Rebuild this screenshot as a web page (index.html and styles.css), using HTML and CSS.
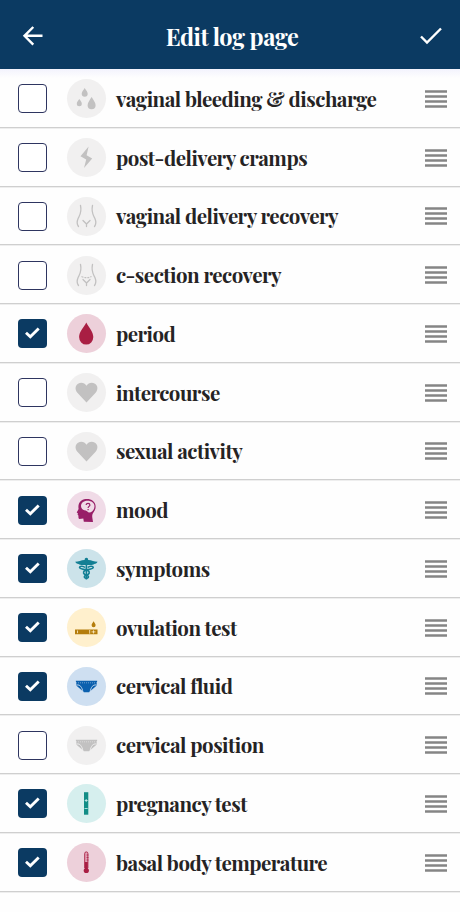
FILE: index.html
```html
<!DOCTYPE html>
<html lang="en">
<head>
<meta charset="utf-8">
<title>Edit log page</title>
<link rel="stylesheet" href="styles.css">
</head>
<body>
<svg width="0" height="0" class="defs">
  <defs>
    <symbol id="tick" viewBox="0 0 29 29"><path d="M8 13.800l4.300 3.900 8.400-8.200" fill="none" stroke="#fff" stroke-width="2.900"/></symbol>
    <symbol id="grip" viewBox="0 0 22 18"><path d="M0 1.500h22M0 6.500h22M0 11.500h22M0 16.500h22" stroke="#858585" stroke-width="2.400"/></symbol>
    <symbol id="heart" viewBox="0 0 39 39"><path fill="currentColor" d="M19.5 29.5L10.6 20C7.500 16.500 8.200 12.500 11 10.700 14 8.900 17.600 9.600 19.500 12.700 21.400 9.600 25 8.900 28 10.700 30.800 12.500 31.500 16.500 28.400 20z"/></symbol>
    <symbol id="hips" viewBox="0 0 39 39"><path fill="none" stroke="currentColor" stroke-width="1.300" stroke-linecap="round" d="M13.500 8.500c1.500 7-.5 9-2.400 13-1.500 3.500-1.100 6 .4 8M25.500 8.500c-1.500 7 .5 9 2.400 13 1.500 3.500 1.100 6-.4 8M16 23.500l3.500 3.500 3.500-3.500M19.500 27v2.500"/></symbol>
    <symbol id="briefs" viewBox="0 0 39 39"><path fill="currentColor" d="M8.800 13.700h21.400l-.7 5-5 4.300-2.400 2.300h-5.200l-2.400-2.300-5-4.300z"/><path d="M9 15.800h21" stroke="var(--disc)" stroke-width=".5" stroke-dasharray="1 1"/><path fill="none" stroke="var(--disc)" stroke-width=".9" d="M9.500 18c3.600-.6 5.500 2 6.400 7M29.500 18c-3.600-.6-5.500 2-6.400 7"/></symbol>
  </defs>
</svg>
<header class="bar">
  <svg class="back" viewBox="0 0 22 22"><path d="M20.500 10.800H2.500M11.300 2L2.500 10.800l8.800 8.800"/></svg>
  <h1>Edit log page</h1>
  <svg class="done" viewBox="0 0 22 18"><path d="M1 9.500l6 6L21 1.500"/></svg>
</header>
<ul class="list">
  <li class="row"><span class="box"></span><span class="disc"><svg viewBox="0 0 39 39"><g fill="currentColor"><path d="M17.700 9c1.500 2.400 3 4 3 5.800a3 3 0 0 1-6 0c0-1.800 1.500-3.400 3-5.800zM12.300 20c1.300 1.800 2.500 3 2.500 4.700a2.500 2.500 0 0 1-5 0c0-1.700 1.200-2.900 2.500-4.700zM24.600 18c2 3.300 4 5.700 4 8.200a4 4 0 0 1-8 0c0-2.500 2-4.900 4-8.200z"/></g></svg></span><span class="label">vaginal bleeding &amp; discharge</span><svg class="grip"><use href="#grip"/></svg></li>
  <li class="row"><span class="box"></span><span class="disc"><svg viewBox="0 0 39 39"><path fill="currentColor" d="M21.600 8.500L13.500 18.200l5.700 3.300-2.200 8.500 8.200-9.500-5.600-3.300z"/></svg></span><span class="label">post-delivery cramps</span><svg class="grip"><use href="#grip"/></svg></li>
  <li class="row"><span class="box"></span><span class="disc"><svg><use href="#hips"/></svg></span><span class="label">vaginal delivery recovery</span><svg class="grip"><use href="#grip"/></svg></li>
  <li class="row"><span class="box"></span><span class="disc"><svg viewBox="0 0 39 39"><use href="#hips"/><path d="M14.500 20.500q5 2.400 10 0" fill="none" stroke="currentColor" stroke-width="1.200" stroke-dasharray="2 1"/></svg></span><span class="label">c-section recovery</span><svg class="grip"><use href="#grip"/></svg></li>
  <li class="row"><span class="box on"><svg><use href="#tick"/></svg></span><span class="disc red"><svg viewBox="0 0 39 39"><path fill="currentColor" d="M19.300 8.500c2.700 5.200 7 9.200 7 14.600a7 7.400 0 0 1-14.200 0c0-5.400 4.500-9.400 7.200-14.600z"/></svg></span><span class="label">period</span><svg class="grip"><use href="#grip"/></svg></li>
  <li class="row"><span class="box"></span><span class="disc"><svg><use href="#heart"/></svg></span><span class="label">intercourse</span><svg class="grip"><use href="#grip"/></svg></li>
  <li class="row"><span class="box"></span><span class="disc"><svg><use href="#heart"/></svg></span><span class="label">sexual activity</span><svg class="grip"><use href="#grip"/></svg></li>
  <li class="row"><span class="box on"><svg><use href="#tick"/></svg></span><span class="disc plum"><svg viewBox="0 0 39 39"><path fill="currentColor" d="M14.500 9.500C18 7.500 23 7.600 26 10c3.400 2.800 3.300 7.600.8 11-1.400 2-1.800 3.200-1.500 5.400l.7 4.600-9.200-.2-.5-3.200-4 .4c-1-.2-.8-1.700-.9-3.400l-.8-1 .3-1.300-1.200-.7 1.900-3.500c-.6-3.600.1-6.900 2.900-8.600z"/><path fill="var(--disc)" d="M14.300 16.500c-1-3 .7-5.700 4-6.500 4.800-1 9.200 1.300 9.200 5.300 0 3.500-2.700 6.200-5.200 6.200-1.800 0-2-1.800-3.600-2-2.200-.2-3.700-.9-4.400-3z"/><path fill="none" stroke="currentColor" stroke-width="1.200" d="M19.200 14c0-2.300 3.700-2.100 3.700-.1 0 1.500-1.800 1.500-1.800 3M21.100 18v1.300"/></svg></span><span class="label">mood</span><svg class="grip"><use href="#grip"/></svg></li>
  <li class="row"><span class="box on"><svg><use href="#tick"/></svg></span><span class="disc teal"><svg viewBox="0 0 39 39"><path fill="currentColor" d="M8.200 12.800c3.300-.2 6.300-2 9.400-1.900l.3-1.300a1.700 1.700 0 0 1 3 0l.3 1.300c3.100-.1 6.100 1.700 9.400 1.900-.8 1.700-2.300 2-3.300 2.200-1.200 1-3 1.100-4.700 1h-6.400c-1.700.1-3.500 0-4.700-1-1-.2-2.500-.5-3.300-2.200z"/><path fill="none" stroke="currentColor" stroke-width="1.600" d="M19.400 14v16.500M18 18.500c-2-2-5.300-1.500-5.500 0 .3 2 5 1.500 8.300 3 2.700 1.600 1.500 3.800-1.400 4.600-2.500.8-2.800 2.600-.7 3.200M20.800 18.500c2-2 5.300-1.500 5.500 0-.3 2-5 1.500-8.300 3-2.700 1.600-1.500 3.800 1.400 4.600 2.500.8 2.800 2.600.7 3.200"/></svg></span><span class="label">symptoms</span><svg class="grip"><use href="#grip"/></svg></li>
  <li class="row"><span class="box on"><svg><use href="#tick"/></svg></span><span class="disc gold"><svg viewBox="0 0 39 39"><path fill="currentColor" d="M8 21.500h22.500v4.700H8zM26.600 13.300c1.100 1.800 2 2.800 2 4a2 2 0 0 1-4 0c0-1.200.9-2.200 2-4z"/><path stroke="var(--disc)" stroke-width=".8" d="M10.500 22.500v2.700M22.700 22v3.700M24.500 23.900h4M26.500 22.300v3.200"/></svg></span><span class="label">ovulation test</span><svg class="grip"><use href="#grip"/></svg></li>
  <li class="row"><span class="box on"><svg><use href="#tick"/></svg></span><span class="disc blue"><svg><use href="#briefs"/></svg></span><span class="label">cervical fluid</span><svg class="grip"><use href="#grip"/></svg></li>
  <li class="row"><span class="box"></span><span class="disc"><svg><use href="#briefs"/></svg></span><span class="label">cervical position</span><svg class="grip"><use href="#grip"/></svg></li>
  <li class="row"><span class="box on"><svg><use href="#tick"/></svg></span><span class="disc mint"><svg viewBox="0 0 39 39"><path fill="currentColor" d="M17 8.200h4.300v22.500H17z"/><path stroke="var(--disc)" stroke-width=".8" d="M17.700 16.500h3M19.200 15v3M17.500 24.500h3.200"/></svg></span><span class="label">pregnancy test</span><svg class="grip"><use href="#grip"/></svg></li>
  <li class="row"><span class="box on"><svg><use href="#tick"/></svg></span><span class="disc rose"><svg viewBox="0 0 39 39"><path d="M17.700 25V10.500a1.600 1.600 0 0 1 3.200 0V25" fill="#e2a5b8" stroke="currentColor" stroke-width=".9"/><path d="M19.300 19v8" stroke="currentColor" stroke-width="3"/><circle cx="19.300" cy="27.500" r="2.600" fill="currentColor"/><path d="M19.500 12h2M19.500 14.500h2M19.500 17h2" stroke="currentColor" stroke-width=".7"/></svg></span><span class="label">basal body temperature</span><svg class="grip"><use href="#grip"/></svg></li>
</ul>
</body>
</html>
```
FILE: styles.css
```css
* { box-sizing: border-box; }
body {
  margin: 0;
  height: 912px;
  overflow: hidden;
  background: #fefefe;
  font-family: "Playfair Display", "Liberation Serif", serif;
  font-weight: 700;
  color: #252324;
}
.defs { display: none; }
svg { display: block; }
.bar {
  display: flex;
  align-items: center;
  justify-content: space-between;
  height: 69px;
  padding: 3px 18px 0 22px;
  background: #0b3a62;
  color: #fff;
}
.bar svg { fill: none; stroke: #fff; stroke-width: 2.400; }
.back { width: 22px; height: 22px; }
.done { width: 22px; height: 18px; }
h1 {
  margin: 0;
  padding: 1px 0 0 0;
  font-size: 23.500px;
  line-height: 30px;
  letter-spacing: -.5px;
}
.list {
  margin: 0;
  padding: 0;
  list-style: none;
  background: linear-gradient(#f3f3fd, #fefefe 9px);
}
.row {
  display: flex;
  align-items: center;
  height: 58.75px;
  padding: 2px 13px 0 18px;
  border-bottom: 1.500px solid #cfcfcf;
  box-shadow: 0 1px 0 #eeeeee;
}
.box {
  width: 29px;
  height: 29px;
  margin-right: 20px;
  border: 1.500px solid #2e3560;
  border-radius: 4px;
  background: #fff;
}
.box.on { border: 0; background: #0b3a62; }
.box svg { width: 29px; height: 29px; }
.disc {
  --disc: #f1f0f0;
  width: 39px;
  height: 39px;
  margin-right: 10px;
  border-radius: 50%;
  background: var(--disc);
  color: #c2c1c1;
}
.disc svg { width: 39px; height: 39px; }
.red { --disc: #edd0da; color: #a91e43; }
.plum { --disc: #f0dbe7; color: #981f68; }
.teal { --disc: #cce3ea; color: #137f94; }
.gold { --disc: #fff0cd; color: #b57d0b; }
.blue { --disc: #cedff1; color: #0b60ae; }
.mint { --disc: #d6efee; color: #118d86; }
.rose { --disc: #edd0da; color: #a91e43; }
.label {
  flex: 1;
  font-size: 20.500px;
  line-height: 28px;
  letter-spacing: -.5px;
  white-space: nowrap;
}
.grip { width: 22px; height: 18px; }
```
